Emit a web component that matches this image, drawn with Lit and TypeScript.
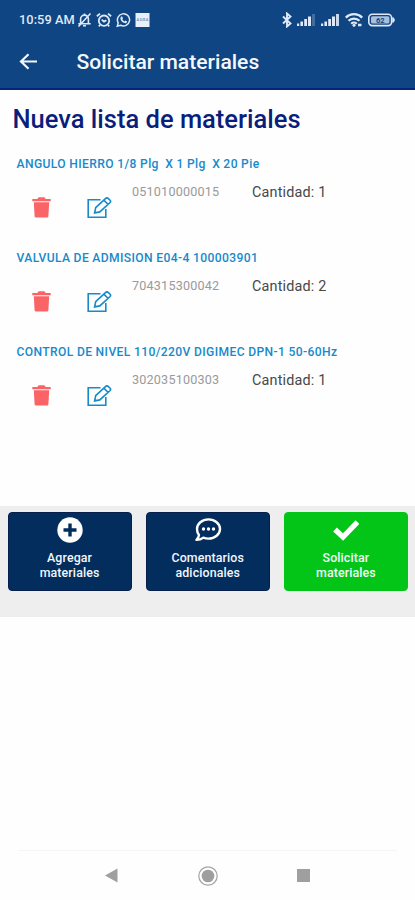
import { LitElement, html, css, svg } from "lit";
import { customElement, property } from "lit/decorators.js";

interface Material {
  name: string;
  code: string;
  quantity: number;
}

const MATERIALS: Material[] = [
  { name: "ANGULO HIERRO 1/8 Plg  X 1 Plg  X 20 Pie", code: "051010000015", quantity: 1 },
  { name: "VALVULA DE ADMISION E04-4 100003901", code: "704315300042", quantity: 2 },
  { name: "CONTROL DE NIVEL 110/220V DIGIMEC DPN-1 50-60Hz", code: "302035100303", quantity: 1 },
];

@customElement("status-bar")
class StatusBar extends LitElement {
  static styles = css`
    :host {
      display: flex;
      align-items: center;
      height: 39px;
      padding: 1px 20px 0 19px;
      box-sizing: border-box;
      color: #dfe9f7;
      font: 500 12.8px/38px Roboto, sans-serif;
    }
    .time { white-space: nowrap; width: 58px; letter-spacing: 0.05px; }
    svg { display: block; flex: none; fill: none; stroke: currentColor; }
    .left { display: flex; align-items: center; gap: 4px; }
    .right { display: flex; align-items: center; gap: 5px; margin-left: auto; }
    .level { font: 700 7.5px Roboto, sans-serif; fill: #0f4583; stroke: none; }
    .app { font: 700 4px Roboto, sans-serif; fill: #6f8fb8; stroke: none; }
  `;

  private bars(last: number) {
    return svg`<g fill="currentColor" stroke="none">
      <rect x="0" y="10.5" width="2.2" height="2.5"/>
      <rect x="3.4" y="8.5" width="2.6" height="4.5"/>
      <rect x="7.2" y="6" width="2.8" height="7"/>
      <rect x="11" y="3.5" width="3" height="9.5"/>
      <rect x="15" y="1" width="3" height="12" opacity=${last}/>
    </g>`;
  }

  render() {
    return html`
      <span class="time">10:59 AM</span>
      <div class="left">
        <svg width="15" height="16" viewBox="0 0 15 16" stroke-width="1.6">
          <path d="M3.6 11.2V7a3.9 3.9 0 0 1 7.8 0v4.2M1.3 11.7h12.4M6 13.7h3M7.5 3V1.6M13.5 1.5L1.5 14.5"/>
        </svg>
        <svg width="16" height="16" viewBox="0 0 16 16" stroke-width="1.8">
          <circle cx="8" cy="8.7" r="5.2"/>
          <path d="M.9 4.2L4 1.6M15.1 4.2L12 1.6M5.7 7.6L8 9.6l2.4-1.4M4 13l-1.2 1.3M12 13l1.2 1.3"/>
        </svg>
        <svg width="15" height="16" viewBox="0 0 15 16" stroke-width="1.5">
          <path d="M1.3 14.2l.9-3.3a6.1 6.1 0 1 1 2.3 2.3z"/>
          <path fill="currentColor" stroke="none" d="M5.2 4.6l1-.1.8 1.9-.7.9c.5 1 1.2 1.6 2.2 2.1l.8-.9 1.8.9c0 1.5-1.3 2-2.4 1.7-2.2-.6-4-2.5-4.3-4.4 0-.9.3-1.6.8-2.1z"/>
        </svg>
        <svg width="15" height="16" viewBox="0 0 15 16">
          <rect x=".5" y="1" width="14" height="14" fill="#e9f0f9" stroke="none"/>
          <text class="app" x="1.5" y="8.6" textLength="12">AUSA</text>
        </svg>
      </div>
      <div class="right">
        <svg width="10" height="16" viewBox="0 0 10 16" stroke-width="1.9">
          <path d="M1 4.5L8.5 11.5 5 14.5V1.5L8.5 4.5 1 11.5"/>
        </svg>
        <svg width="19" height="14" viewBox="0 0 19 14">${this.bars(0.25)}</svg>
        <svg width="19" height="14" viewBox="0 0 19 14">${this.bars(0.9)}</svg>
        <svg width="18" height="16" viewBox="0 0 18 16" stroke-width="2.2">
          <path d="M.8 5.6a11.6 11.6 0 0 1 16.4 0M3.5 8.8a7.8 7.8 0 0 1 11 0M6.2 11.8a4 4 0 0 1 5.6 0"/>
          <circle cx="9" cy="13.3" r="1.5" fill="currentColor" stroke="none"/>
          <path d="M13 13h3.5" stroke-width="2.5"/>
        </svg>
        <svg width="27" height="14" viewBox="0 0 27 14">
          <rect x=".8" y="1.2" width="22.8" height="11.4" rx="3.5" stroke-width="1.6"/>
          <rect x="3" y="3.3" width="18.4" height="7.2" rx="1.5" fill="#a9c0dd" stroke="none"/>
          <path d="M24.8 4.5c2 .8 2 4.2 0 5z" fill="currentColor"/>
          <text class="level" x="8" y="9.7">62</text>
        </svg>
      </div>
    `;
  }
}

@customElement("material-row")
class MaterialRow extends LitElement {
  @property({ attribute: false }) item!: Material;

  static styles = css`
    :host { display: block; height: 94.2px; font-family: Roboto, sans-serif; }
    .name {
      margin: 0 0 0 16.5px;
      height: 20px;
      font-size: 12.1px;
      font-weight: 500;
      line-height: 21px;
      letter-spacing: 0.39px;
      word-spacing: -0.2px;
      color: #168acb;
      white-space: pre;
    }
    .body { display: flex; align-items: flex-start; }
    .trash { margin: 23px 0 0 32px; }
    .edit { margin: 23px 0 0 36px; }
    svg { display: block; flex: none; }
    .code {
      margin-left: 20px;
      width: 120px;
      font-size: 12.6px;
      line-height: 36px;
      letter-spacing: 0.2px;
      color: #9a9a9a;
    }
    .quantity {
      font-size: 14.4px;
      line-height: 37px;
      letter-spacing: 0.18px;
      color: #484848;
      white-space: nowrap;
    }
  `;

  render() {
    return html`
      <div class="name">${this.item.name}</div>
      <div class="body">
        <svg class="trash" width="19" height="21" viewBox="0 0 19 21" fill="#fb6467">
          <path d="M.3 2h5L6.6.3h5.8L13.7 2h5v2.2H.3zM1.8 5.2h15.4l-.8 14q-.1 1.3-1.4 1.3H4q-1.3 0-1.4-1.3z"/>
        </svg>
        <svg class="edit" width="25" height="22" viewBox="0 0 25 22" fill="none" stroke="#168acb" stroke-width="1.6">
          <path d="M13.5 2.7H1.2v17.6h17.6V12"/>
          <path d="M8.7 10.7L18.7 1.3q1.2-1 2.4 0l2 1.9q1 1.2 0 2.3L12.8 14.9 7.6 15.9zM16.8 3.1l4.2 4.2"/>
        </svg>
        <span class="code">${this.item.code}</span>
        <span class="quantity">Cantidad: ${this.item.quantity}</span>
      </div>
    `;
  }
}

@customElement("app-root")
class AppRoot extends LitElement {
  static styles = css`
    :host {
      display: flex;
      flex-direction: column;
      height: 900px;
      background: #fefefe;
      font-family: Roboto, sans-serif;
      overflow: hidden;
    }
    .header { height: 90px; box-sizing: border-box; background: #0f4583; border-bottom: 2px solid #06247a; flex: none; }
    .toolbar { display: flex; align-items: center; height: 46px; padding-left: 19px; }
    .title { margin: 0 0 2px 38.5px; font-size: 21.1px; font-weight: 500; color: #f4f8fd; white-space: nowrap; }
    svg { display: block; flex: none; }
    .heading {
      margin: 11px 0 0 12.5px;
      font-size: 25.5px;
      line-height: 37px;
      font-weight: 500;
      color: #0a1f7c;
      white-space: nowrap;
    }
    .list { margin-top: 16px; flex: none; height: 352px; }
    .actions {
      display: grid;
      grid-template-columns: repeat(3, 1fr);
      gap: 14px;
      flex: none;
      height: 111px;
      padding: 5.5px 7px 26px 7.5px;
      box-sizing: border-box;
      background: #eee;
    }
    .action {
      display: flex;
      flex-direction: column;
      align-items: center;
      padding: 4px 0 0;
      border: 1px solid #061f4d;
      border-radius: 4px;
      background: #022d5d;
      color: #f3f7fb;
      font: 500 12.4px/15px Roboto, sans-serif;
      text-align: center;
    }
    .confirm { background: #02c518; border-color: #02c518; }
    .label { margin-top: 7px; white-space: pre-line; letter-spacing: 0.12px; }
    .nav {
      display: flex;
      margin: auto 18px 0;
      height: 50px;
      box-sizing: border-box;
      border-top: 1px solid #f5f5f5;
      align-items: center;
      padding-left: 87px;
      flex: none;
    }
    .home { margin-left: 79px; }
    .recent { margin-left: 78px; }
  `;

  render() {
    return html`
      <header class="header">
        <status-bar></status-bar>
        <div class="toolbar">
          <svg width="19" height="18" viewBox="0 0 19 18" fill="none" stroke="#f4f8fd" stroke-width="2.2">
            <path d="M9.5 1.2L2 8.500l7.500 7.300M2 8.500h16"/>
          </svg>
          <h1 class="title">Solicitar materiales</h1>
        </div>
      </header>
      <h2 class="heading">Nueva lista de materiales</h2>
      <section class="list">
        ${MATERIALS.map((m) => html`<material-row .item=${m}></material-row>`)}
      </section>
      <section class="actions">
        <button class="action">
          <svg width="26" height="26" viewBox="0 0 26 26">
            <circle cx="13" cy="13" r="12.7" fill="#fff"/>
            <path d="M13 6.5v13M6.5 13h13" stroke="#022d5d" stroke-width="3.4"/>
          </svg>
          <span class="label">Agregar\nmateriales</span>
        </button>
        <button class="action">
          <svg width="28" height="26" viewBox="0 0 28 26">
            <path d="M14.500 2.400c6.500 0 11.500 4.300 11.500 9.600s-5 9.600-11.500 9.600c-1.900 0-3.600-.3-5.100-1-1.900 1.500-4.200 2.300-6.900 2.300 1.500-1.500 2.300-3.100 2.500-5C3.700 16.300 3 14.200 3 12c0-5.300 5-9.600 11.500-9.600z" fill="none" stroke="#fff" stroke-width="2.4" stroke-linejoin="round"/>
            <g fill="#fff"><circle cx="9.5" cy="12" r="1.7"/><circle cx="14.5" cy="12" r="1.7"/><circle cx="19.5" cy="12" r="1.7"/></g>
          </svg>
          <span class="label">Comentarios\nadicionales</span>
        </button>
        <button class="action confirm">
          <svg width="26" height="26" viewBox="0 0 26 26">
            <path d="M2 12.5l8 7.5L24.5 5" fill="none" stroke="#fff" stroke-width="5.3"/>
          </svg>
          <span class="label">Solicitar\nmateriales</span>
        </button>
      </section>
      <nav class="nav">
        <svg width="13" height="15" viewBox="0 0 13 15"><path d="M0 7.5L12.5.5v14z" fill="#9f9f9f"/></svg>
        <svg class="home" width="22" height="22" viewBox="0 0 22 22">
          <circle cx="11" cy="11" r="9.2" fill="none" stroke="#a4a4a4" stroke-width="1.2"/>
          <circle cx="11" cy="11" r="6.3" fill="#9f9f9f"/>
        </svg>
        <svg class="recent" width="13" height="13" viewBox="0 0 13 13"><rect width="13" height="13" fill="#9f9f9f"/></svg>
      </nav>
    `;
  }
}
